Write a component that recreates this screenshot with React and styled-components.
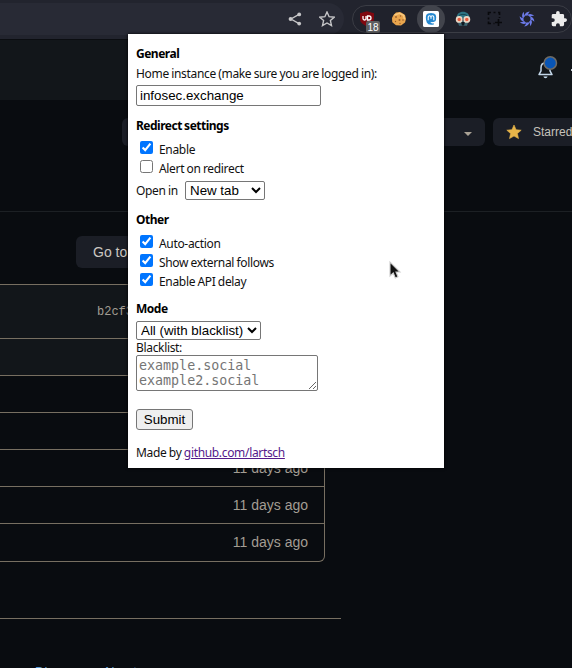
import React from "react";
import styled, { createGlobalStyle } from "styled-components";

const GlobalStyle = createGlobalStyle`
  * { box-sizing: border-box; }
  html, body { margin: 0; overflow: hidden; background: #090c10; }
`;

const Screen = styled.div`
  position: relative;
  width: 572px;
  height: 668px;
  overflow: hidden;
  background: #090c10;
  font-family: "Liberation Sans", Arial, sans-serif;
`;

/* ---------- browser toolbar ---------- */
const Toolbar = styled.div`
  display: flex;
  height: 40px;
  background: #22242e;
  border-bottom: 1px solid #0b0d11;
  padding-top: 3px;
`;
const AddressBar = styled.div`
  display: flex;
  align-items: center;
  justify-content: flex-end;
  gap: 17px;
  width: 345px;
  height: 32px;
  padding-right: 9px;
  border-radius: 0 16px 16px 0;
  background: #282a35;
`;
const ExtensionBar = styled.div`
  display: flex;
  align-items: center;
  width: 220px;
  height: 28px;
  margin: 2px 0 0 8px;
  border: 1px solid #3b3d45;
  border-radius: 14px;
  background: #20222c;
`;
const ExtensionButton = styled.div`
  position: relative;
  display: flex;
  align-items: center;
  justify-content: center;
  flex: none;
  width: 28px;
  height: 28px;
  margin-right: 4px;
  border-radius: 50%;
  background: ${(p) => (p.$active ? "#42444c" : "transparent")};
`;
const Badge = styled.span`
  position: absolute;
  left: 13px;
  top: 16px;
  width: 14px;
  height: 12px;
  border-radius: 2px;
  background: #5d5e60;
  color: #fff;
  font-size: 10px;
  line-height: 13px;
  text-align: center;
`;

/* ---------- page behind the popup ---------- */
const SiteHeader = styled.header`
  display: flex;
  align-items: center;
  justify-content: flex-end;
  height: 60px;
  background: #12161a;
`;
const Bell = styled.div`
  width: 20px;
  height: 26px;
  margin: 0 13px 3px 0;
`;
const HeaderCaret = styled.div`
  width: 1px;
  height: 2px;
  background: #c4ccd4;
`;
const RepoActions = styled.div`
  display: flex;
  gap: 8px;
  height: 112px;
  padding: 18px 0 0 122px;
  border-bottom: 1px solid #1c2024;
`;
const ActionButton = styled.div`
  display: flex;
  align-items: center;
  flex: none;
  justify-content: ${(p) => (p.$end ? "flex-end" : "flex-start")};
  gap: 11px;
  width: ${(p) => p.$width}px;
  height: 28px;
  padding: ${(p) => (p.$end ? "3px 13px 0" : "0 13px")};
  border-radius: 6px;
  background: #1b1e26;
  color: #c6c2bb;
  font-size: 12px;
`;
const GoToFile = styled.div`
  width: 100px;
  height: 32px;
  margin: 24px 0 16px 76px;
  padding-left: 17px;
  border-radius: 6px;
  background: #1b1e26;
  color: #cbc7c1;
  font-size: 14px;
  line-height: 32px;
`;
const FileTable = styled.div`
  width: 325px;
  border: solid #776f61;
  border-width: 1px 1px 1px 0;
  border-radius: 0 6px 6px 0;
  overflow: hidden;
`;
const FileRow = styled.div`
  height: ${(p) => p.$height || 37}px;
  padding-right: 16px;
  border-bottom: ${(p) => (p.$last ? "0" : "1px solid #776f61")};
  background: ${(p) => (p.$raised ? "#12161a" : "transparent")};
  color: #a39d93;
  font-size: 14px;
  line-height: 36px;
  text-align: right;
`;
const CommitHash = styled.div`
  padding-left: 97px;
  font: 12px/54px "Liberation Mono", monospace;
  text-align: left;
`;
const Divider = styled.div`
  width: 341px;
  height: 1px;
  margin-top: 56px;
  background: #776f61;
`;
const ReadmeTitle = styled.div`
  display: flex;
  gap: 10px;
  margin-top: 44px;
  padding-left: 35px;
  color: #5b9bd5;
  font-size: 13px;
  line-height: 18px;
`;

/* ---------- extension popup ---------- */
const Popup = styled.form`
  position: absolute;
  left: 128px;
  top: 34px;
  width: 316px;
  height: 434px;
  padding: 10px 8px;
  background: #fff;
  color: #111;
  font: 12px/20px "Noto Sans", sans-serif;
  letter-spacing: -0.33px;
  word-spacing: -0.4px;
  box-shadow: 0 0 3px #000;
`;
const SectionTitle = styled.div`
  height: 20px;
  margin-top: ${(p) => p.$gap || 0}px;
  font-weight: 700;
  letter-spacing: -0.5px;
  color: #000;
`;
const FieldLabel = styled.div`
  height: ${(p) => p.$height || 20}px;
  line-height: ${(p) => p.$height || 20}px;
`;
const TextInput = styled.input`
  display: block;
  width: 185px;
  height: 21px;
  margin: 1px 0 0;
  padding: 1px 2px 1px 3px;
  border: 1px solid #767676;
  border-radius: 2px;
  outline: 0;
  color: #000;
  font: 13.333px "Liberation Sans", Arial, sans-serif;
`;
const Checks = styled.div`
  padding-top: 4px;
`;
const CheckRow = styled.label`
  display: flex;
  height: 19px;
  padding-left: 4px;
`;
const Checkbox = styled.input`
  width: 13px;
  height: 13px;
  margin: 1px 6px 0 0;
`;
const InlineField = styled.div`
  display: flex;
  align-items: center;
  height: 21px;
  margin-top: 2px;
`;
const InlineLabel = styled.span`
  width: 49px;
`;
const Select = styled.select`
  display: block;
  width: ${(p) => p.$width}px;
  height: 19px;
  margin: ${(p) => p.$top || 0}px 0 0;
  padding: 0;
  border: 1px solid #767676;
  border-radius: 2px;
  background: #fff;
  color: #000;
  font: 13.333px "Liberation Sans", Arial, sans-serif;
`;
const BlacklistInput = styled.textarea`
  display: block;
  width: 182px;
  height: 36px;
  margin: 0;
  padding: 2px;
  border: 1px solid #767676;
  border-radius: 2px;
  overflow: hidden;
  font: 13.333px/15px "DejaVu Sans Mono", monospace;
  &::placeholder { color: #757575; }
`;
const SubmitButton = styled.button`
  display: block;
  width: 57px;
  height: 21px;
  margin: 18px 0 13px;
  padding: 0;
  border: 1px solid #767676;
  border-radius: 3px;
  background: #efefef;
  color: #000;
  font: 13.333px "Liberation Sans", Arial, sans-serif;
`;
const ProfileLink = styled.a`
  color: #551a8b;
  text-decoration: underline;
`;
const Cursor = styled.svg`
  position: absolute;
  left: 388px;
  top: 260px;
`;

const ShareIcon = () => (
  <svg width="14" height="14" viewBox="0 0 14 14" fill="#c6c6c8" stroke="#c6c6c8">
    <path d="M11 2.4 3 7l8 4.6" fill="none" strokeWidth="1.3" />
    <circle cx="11.2" cy="2.4" r="1.9" stroke="none" />
    <circle cx="2.6" cy="7" r="2" stroke="none" />
    <circle cx="11.2" cy="11.6" r="1.9" stroke="none" />
  </svg>
);
const STAR = "M8 1l2.100 4.700 5.100.5-3.800 3.400 1.100 5L8 12l-4.500 2.600 1.100-5L.8 6.200l5.100-.5z";
const StarIcon = ({ filled }) => (
  <svg width="16" height="16" viewBox="0 0 16 16">
    <path d={STAR} fill={filled ? "#e7b549" : "none"} stroke={filled ? "#e7b549" : "#c6c6c8"} strokeWidth={filled ? 0.6 : 1.4} strokeLinejoin={filled ? "round" : "miter"} />
  </svg>
);
const ShieldIcon = () => (
  <svg width="16" height="16" viewBox="0 0 16 16">
    <path d="M8 .3 15 2.300V8c0 4-4.500 6-7 7.500C5.500 14 1 12 1 8V2.300z" fill="#800810" />
    <path d="M4 5v2.500q0 1.500 1.500 1.500T7 7.500V5m1.500 4.800V5H10q2 0 2 2t-2 2H9" fill="none" stroke="#fff" strokeWidth="1.300" />
  </svg>
);
const CookieIcon = () => (
  <svg width="16" height="16" viewBox="0 0 16 16">
    <path d="M5 1.500 9 1l2 1 3 2 1 4-1 3.500L10 14.500l-5-.3-3.700-3L1 7l1.500-3z" fill="#e9a54d" />
    <path d="M3.500 4 8.500 2.300l4 2 1 4" stroke="#f7c87e" strokeWidth="1.500" fill="none" />
    <g fill="#9a5e2c"><circle cx="5" cy="6" r=".9" /><circle cx="9.500" cy="5" r=".7" /><circle cx="8.500" cy="9" r="1" /><circle cx="4.500" cy="10.500" r=".7" /><circle cx="12" cy="9" r=".8" /><circle cx="9" cy="12.500" r=".7" /></g>
  </svg>
);
const MastodonIcon = () => (
  <svg width="16" height="16" viewBox="0 0 16 16">
    <rect width="16" height="16" rx="1.500" fill="#fff" />
    <path d="M5 2.500q3-.8 6 0Q13.200 3.200 13.200 6q0 3.500-.9 4.300-1.100.9-5 1 .6 1.500 3.500 1v1.200Q5 14.500 3.800 11.500 2.800 9 2.800 6 2.800 3.200 5 2.500z" fill="#2588d0" />
    <path d="M5.200 9.200V6Q5.200 4.700 6.500 4.700T8 6v1.800M8 6q0-1.300 1.400-1.300T10.800 6v3.200" fill="none" stroke="#fff" strokeWidth="1.100" />
  </svg>
);
const MaskIcon = () => (
  <svg width="16" height="16" viewBox="0 0 16 16">
    <path d="M1.500 7.500C1.500 2.800 4.500.8 8 .8s6.500 2 6.500 6.700z" fill="#2d7483" />
    <path d="M4 4.500C5.500 3 10.500 3 12 4.500" fill="none" stroke="#174650" />
    <path d="M2.500 10h11l-1.500 4.800H4z" fill="#3b6672" />
    <path d="M6 11h4l-1 3.500H7z" fill="#101820" />
    <circle cx="4.200" cy="8.400" r="2.600" fill="#e85a3d" stroke="#ead7c5" strokeWidth="1.700" />
    <circle cx="11.800" cy="8.400" r="2.600" fill="#e85a3d" stroke="#ead7c5" strokeWidth="1.700" />
  </svg>
);
const CaptureIcon = () => (
  <svg width="16" height="16" viewBox="0 0 16 16">
    <path d="M1.500 4V1.500H4m2.500 0h2m2.500 0h1.500V4m0 2v1M1.500 6.500v2m0 2v2H4m2.500 0h1M11.500 8v7M8 11.500h7" fill="none" stroke="#08090c" strokeWidth="1.600" />
  </svg>
);
const SwirlIcon = () => (
  <svg width="16" height="16" viewBox="0 0 16 16">
    {[0, 45, 90, 135, 180, 225, 270, 315].map((a) => (
      <path key={a} d="M5.600 4.800Q6 1.200 10.800.6 8.900 2.500 8.700 4.500z" fill="#6c7ae8" transform={`rotate(${a} 8 8)`} />
    ))}
  </svg>
);
const PuzzleIcon = () => (
  <svg width="16" height="16" viewBox="1 1 22 22">
    <path d="M20.500 11H19V7a2 2 0 0 0-2-2h-4V3.500a2.500 2.500 0 0 0-5 0V5H4a2 2 0 0 0-2 2v3.800h1.500a2.700 2.700 0 0 1 0 5.400H2V20a2 2 0 0 0 2 2h3.800v-1.500a2.700 2.700 0 0 1 5.400 0V22H17a2 2 0 0 0 2-2v-4h1.500a2.500 2.500 0 0 0 0-5z" fill="#ebebeb" />
  </svg>
);
const BellIcon = () => (
  <svg width="20" height="26" viewBox="0 0 20 26">
    <path d="M3 11.500C3 8.500 4.900 6.800 7.500 6.800s4.500 1.700 4.500 4.700v3.200l2 3.700H1l2-3.700z" transform="translate(0 .2)" fill="none" stroke="#c4d8ea" strokeWidth="1.500" strokeLinejoin="round" />
    <path d="M5.400 20.500h4.200q-.5 1.700-2.100 1.700T5.400 20.500z" fill="#c8dff2" />
    <circle cx="12.300" cy="7" r="6.200" fill="#0855b5" stroke="#6f6b64" strokeWidth="1.500" />
  </svg>
);
const CaretIcon = () => (
  <svg width="8" height="4" viewBox="0 0 8 4">
    <path d="M0 0h8L4 4z" fill="#aaa295" />
  </svg>
);

const CheckItem = ({ label, checked }) => (
  <CheckRow>
    <Checkbox type="checkbox" defaultChecked={checked} />
    {label}
  </CheckRow>
);

export default function App() {
  return (
    <Screen>
      <GlobalStyle />
      <Toolbar>
        <AddressBar>
          <ShareIcon />
          <StarIcon />
        </AddressBar>
        <ExtensionBar>
          <ExtensionButton><ShieldIcon /><Badge>18</Badge></ExtensionButton>
          <ExtensionButton><CookieIcon /></ExtensionButton>
          <ExtensionButton $active><MastodonIcon /></ExtensionButton>
          <ExtensionButton><MaskIcon /></ExtensionButton>
          <ExtensionButton><CaptureIcon /></ExtensionButton>
          <ExtensionButton><SwirlIcon /></ExtensionButton>
          <ExtensionButton><PuzzleIcon /></ExtensionButton>
        </ExtensionBar>
      </Toolbar>

      <SiteHeader>
        <Bell><BellIcon /></Bell>
        <HeaderCaret />
      </SiteHeader>
      <RepoActions>
        <ActionButton $width={363} $end><CaretIcon /></ActionButton>
        <ActionButton $width={120}><StarIcon filled />Starred</ActionButton>
      </RepoActions>
      <GoToFile>Go to</GoToFile>
      <FileTable>
        <FileRow $raised $height={54}><CommitHash>b2cf3</CommitHash></FileRow>
        <FileRow $raised />
        <FileRow />
        <FileRow />
        <FileRow>11 days ago</FileRow>
        <FileRow>11 days ago</FileRow>
        <FileRow $last>11 days ago</FileRow>
      </FileTable>
      <Divider />
      <ReadmeTitle><span>Discourse</span><span>About</span></ReadmeTitle>

      <Popup>
        <SectionTitle>General</SectionTitle>
        <FieldLabel>Home instance (make sure you are logged in):</FieldLabel>
        <TextInput defaultValue="infosec.exchange" />
        <SectionTitle $gap={10}>Redirect settings</SectionTitle>
        <Checks>
          <CheckItem label="Enable" checked />
          <CheckItem label="Alert on redirect" />
        </Checks>
        <InlineField>
          <InlineLabel>Open in</InlineLabel>
          <Select $width={80}><option>New tab</option></Select>
        </InlineField>
        <SectionTitle $gap={9}>Other</SectionTitle>
        <Checks>
          <CheckItem label="Auto-action" checked />
          <CheckItem label="Show external follows" checked />
          <CheckItem label="Enable API delay" checked />
        </Checks>
        <SectionTitle $gap={8}>Mode</SectionTitle>
        <Select $width={125} $top={2}><option>All (with blacklist)</option></Select>
        <FieldLabel $height={15}>Blacklist:</FieldLabel>
        <BlacklistInput placeholder={"example.social\nexample2.social"} />
        <SubmitButton type="button">Submit</SubmitButton>
        <div>Made by <ProfileLink>github.com/lartsch</ProfileLink></div>
      </Popup>
      <Cursor width="14" height="21" viewBox="0 0 14 21">
        <path d="M2 2v14l3.300-3 2 5 2.700-1.200-2-4.800h4z" fill="#111" stroke="#ccc" strokeWidth="1.100" />
      </Cursor>
    </Screen>
  );
}
